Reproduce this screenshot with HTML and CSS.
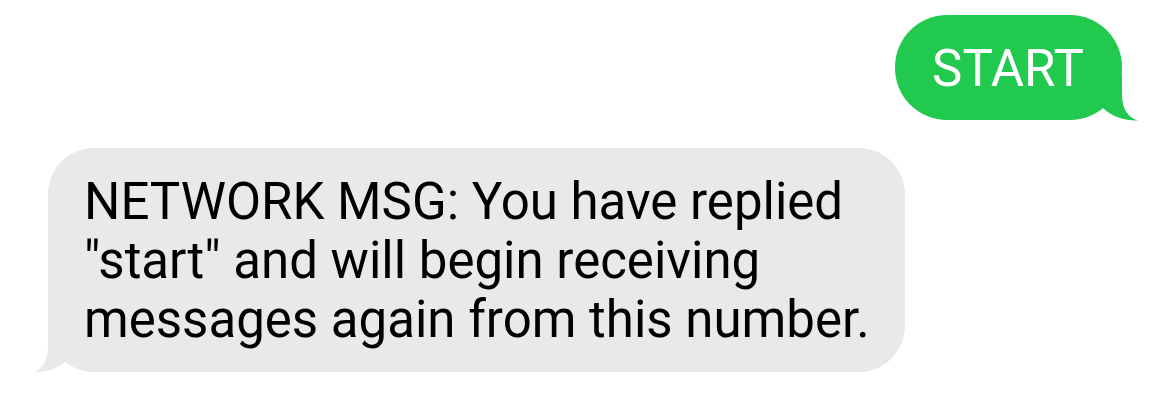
FILE: index.html
```html
<!DOCTYPE html>
<html lang="en">
<head>
<meta charset="utf-8">
<title>Messages</title>
<link rel="stylesheet" href="styles.css">
</head>
<body>
<div class="thread">
  <div class="bubble sent">
    <span class="text">START</span>
    <svg class="tail tail-right" width="50" height="46" viewBox="0 0 50 46" aria-hidden="true">
      <path d="M0 0 L32 0 L32 20 C32 35 39 43 48 45.5 C36 46 22 42 13 33 L0 20 Z"/>
    </svg>
  </div>
  <div class="bubble received">
    <span class="text">NETWORK MSG: You have replied "start" and will begin receiving messages again from this number.</span>
    <svg class="tail tail-left" width="50" height="46" viewBox="0 0 50 46" aria-hidden="true">
      <path d="M0 0 L32 0 L32 20 C32 35 39 43 48 45.5 C36 46 22 42 13 33 L0 20 Z"/>
    </svg>
  </div>
</div>
</body>
</html>
```

FILE: styles.css
```css
html, body {
  margin: 0;
  padding: 0;
  background: #ffffff;
}

body {
  font-family: Roboto, "Liberation Sans", Arial, sans-serif;
  -webkit-font-smoothing: antialiased;
}

.thread {
  display: flex;
  flex-direction: column;
  padding: 15px 48px 0 48px;
}

.bubble {
  position: relative;
  box-sizing: border-box;
  font-size: 51px;
  line-height: 59px;
}

.sent {
  align-self: flex-end;
  background: #22c94f;
  color: #ffffff;
  border-radius: 52px;
  height: 105px;
  padding: 24px 38px 22px 37px;
}

.received {
  align-self: flex-start;
  margin-top: 28px;
  background: #e9e9eb;
  color: #000000;
  border-radius: 46px;
  width: 857px;
  height: 224px;
  padding: 24px 28px 23px 36px;
}

.text {
  position: relative;
  z-index: 1;
}

.tail {
  position: absolute;
  bottom: -1px;
  display: block;
}

.tail-right {
  right: -18px;
}

.tail-right path {
  fill: #22c94f;
}

.tail-left {
  left: -18px;
  transform: scaleX(-1);
}

.tail-left path {
  fill: #e9e9eb;
}
```
